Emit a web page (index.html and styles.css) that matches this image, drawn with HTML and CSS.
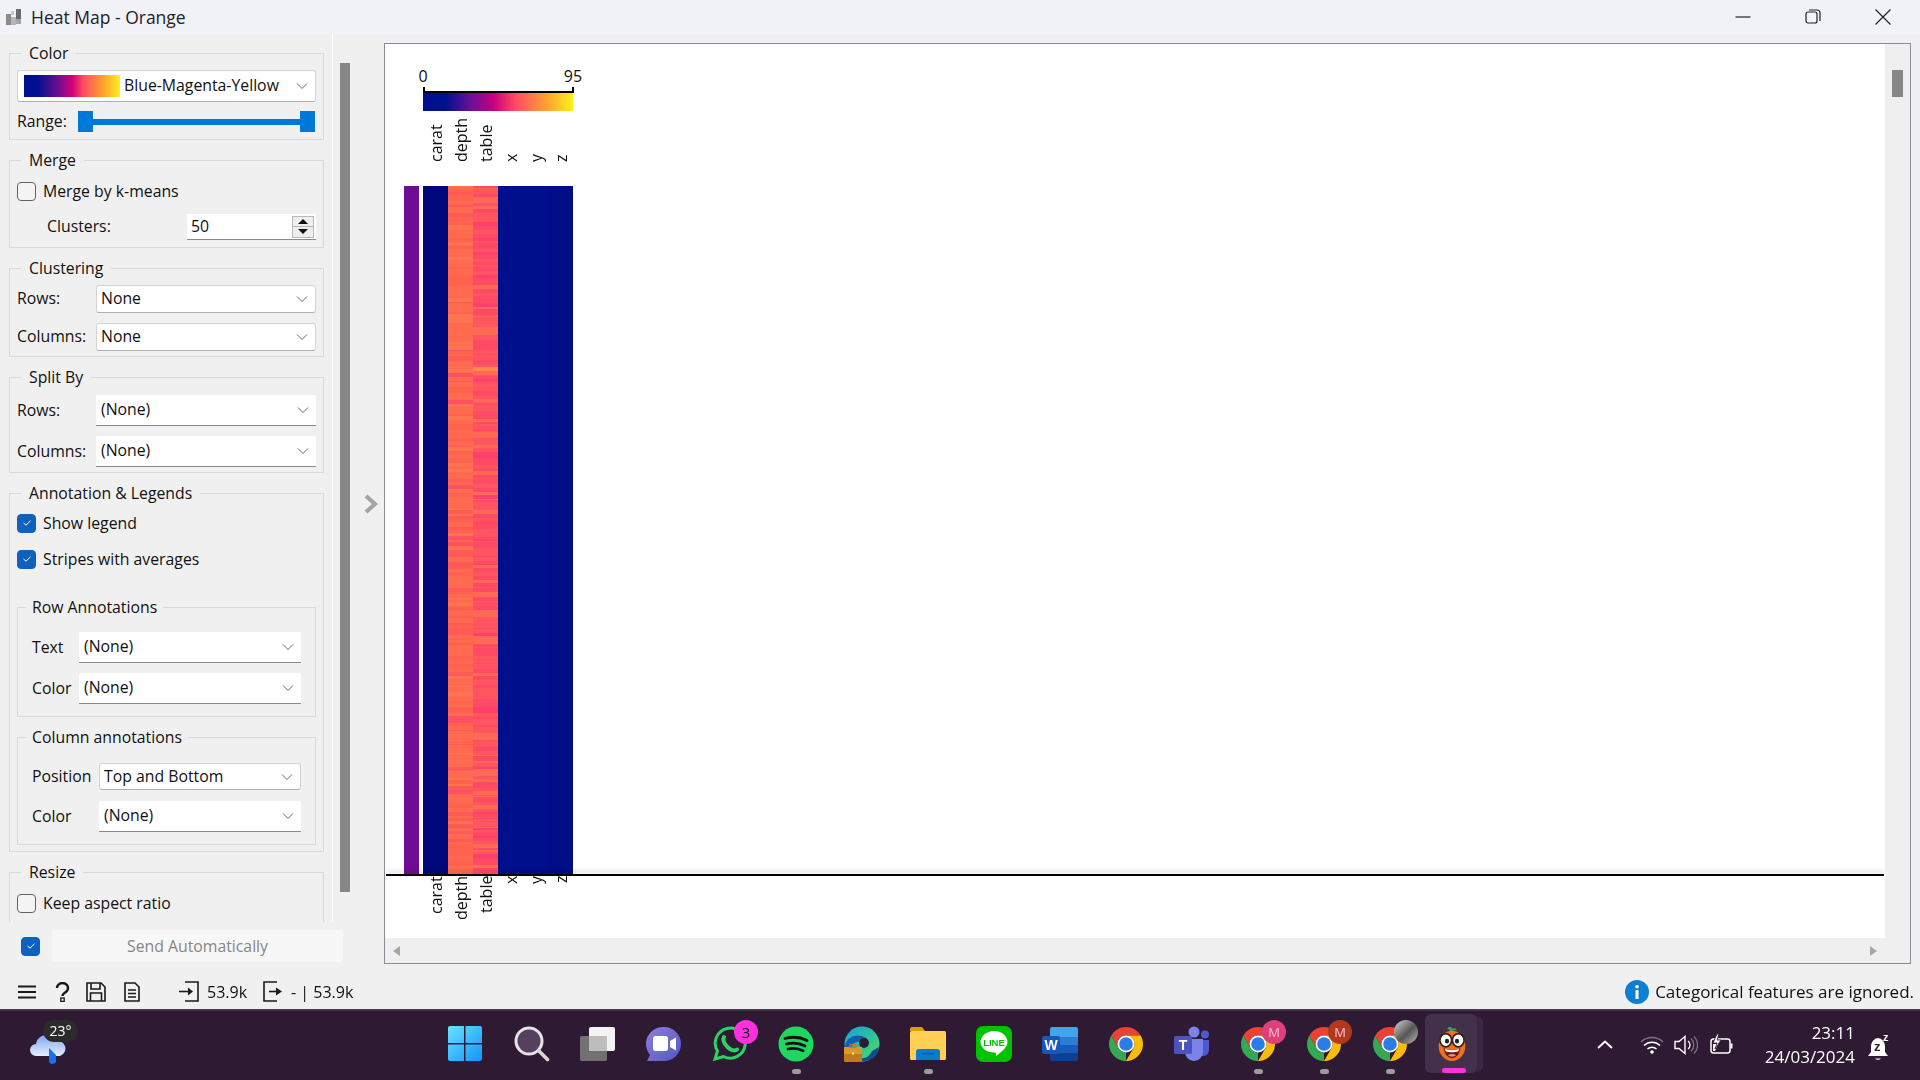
FILE: index.html
```html
<!DOCTYPE html>
<html lang="en">
<head>
    <meta charset="UTF-8">
    <title>Heat Map - Orange</title>
    <link rel="stylesheet" href="styles.css">
</head>
<body>
    <svg class="sprite" width="0" height="0">
        <symbol id="chrome" viewBox="0 0 36 36">
            <path fill="#ea4335" d="M3.3 9.5A17 17 0 0 1 32.7 9.5H18A8.5 8.5 0 0 0 10.6 22.2Z"/>
            <path fill="#fbbc04" d="M32.7 9.5A17 17 0 0 1 18 35L25.4 22.2A8.5 8.5 0 0 0 18 9.5Z"/>
            <path fill="#34a853" d="M18 35A17 17 0 0 1 3.3 9.5L10.6 22.2A8.5 8.5 0 0 0 18 26.5Z"/>
            <circle cx="18" cy="18" r="8.5" fill="#fff"/>
            <circle cx="18" cy="18" r="6.8" fill="#2a7de8"/>
        </symbol>
        <symbol id="chevron" viewBox="0 0 12 8">
            <path d="M1 1.5l5 5 5-5" fill="none" stroke="#666" stroke-width="1"/>
        </symbol>
        <symbol id="tick" viewBox="0 0 10 8">
            <path d="M1.5 4l2.5 2.2 4.5-4.4" fill="none" stroke="#fff" stroke-width="1"/>
        </symbol>
    </svg>

    <header class="titlebar">
        <svg class="app-icon" width="16" height="16" viewBox="0 0 16 16">
            <rect x="0" y="5" width="5" height="11" fill="#8a8a8a"/>
            <rect x="5" y="8" width="5" height="8" fill="#b5b5b5"/>
            <rect x="10" y="0" width="5" height="10" fill="#6a6a6a"/>
            <rect x="10" y="10" width="5" height="5" fill="#a5a5a5"/>
            <rect x="5" y="2" width="3" height="4" fill="#c8c8c8"/>
        </svg>
        <span class="title-text">Heat Map - Orange</span>
        <div class="window-btns">
            <div class="window-btn">
                <svg width="16" height="16" viewBox="0 0 16 16"><path d="M0.5 8h15" stroke="#222" stroke-width="1.2"/></svg>
            </div>
            <div class="window-btn">
                <svg width="16" height="16" viewBox="0 1 16 16"><rect x="1" y="4" width="11" height="11" rx="2" fill="none" stroke="#222" stroke-width="1.2"/><path d="M4 2h8a3 3 0 0 1 3 3v8" fill="none" stroke="#222" stroke-width="1.2"/></svg>
            </div>
            <div class="window-btn">
                <svg width="16" height="16" viewBox="0 0 16 16"><path d="M0.5 0.5l15 15M15.5 0.5l-15 15" stroke="#222" stroke-width="1.2"/></svg>
            </div>
        </div>
    </header>

    <main class="window-body">
        <div class="left-col">
            <div class="left-top">
                <div class="controls">
                    <fieldset class="group group-color">
                        <legend>Color</legend>
                        <div class="combo combo-outline combo-palette">
                            <span class="palette"></span>
                            <span class="combo-text">Blue-Magenta-Yellow</span>
                            <svg class="arrow"><use href="#chevron"/></svg>
                        </div>
                        <div class="row range-row">
                            <span class="label-range">Range:</span>
                            <div class="slider"><span class="handle"></span><span class="handle"></span></div>
                        </div>
                    </fieldset>

                    <fieldset class="group group-merge">
                        <legend>Merge</legend>
                        <label class="check-row merge-check"><span class="check"></span>Merge by k-means</label>
                        <div class="row clusters-row">
                            <span class="label-clusters">Clusters:</span>
                            <div class="spin">
                                <span class="spin-value">50</span>
                                <div class="spin-btns">
                                    <span class="spin-btn"><i class="tri-up"></i></span>
                                    <span class="spin-btn"><i class="tri-down"></i></span>
                                </div>
                            </div>
                        </div>
                    </fieldset>

                    <fieldset class="group group-clustering">
                        <legend>Clustering</legend>
                        <div class="row h28 first-clustering">
                            <span class="label-wide">Rows:</span>
                            <div class="combo combo-outline grow"><span class="combo-text">None</span><svg class="arrow"><use href="#chevron"/></svg></div>
                        </div>
                        <div class="row h28 second-clustering">
                            <span class="label-wide">Columns:</span>
                            <div class="combo combo-outline grow"><span class="combo-text">None</span><svg class="arrow"><use href="#chevron"/></svg></div>
                        </div>
                    </fieldset>

                    <fieldset class="group group-split">
                        <legend>Split By</legend>
                        <div class="row h31 first-split">
                            <span class="label-wide">Rows:</span>
                            <div class="combo grow"><span class="combo-text">(None)</span><svg class="arrow"><use href="#chevron"/></svg></div>
                        </div>
                        <div class="row h31 second-split">
                            <span class="label-wide">Columns:</span>
                            <div class="combo grow"><span class="combo-text">(None)</span><svg class="arrow"><use href="#chevron"/></svg></div>
                        </div>
                    </fieldset>

                    <fieldset class="group group-annotation">
                        <legend>Annotation &amp; Legends</legend>
                        <label class="check-row legend-check"><span class="check checked"><svg width="10" height="8"><use href="#tick"/></svg></span>Show legend</label>
                        <label class="check-row stripes-check"><span class="check checked"><svg width="10" height="8"><use href="#tick"/></svg></span>Stripes with averages</label>

                        <fieldset class="subgroup sub-row">
                            <legend>Row Annotations</legend>
                            <div class="row h31 first-rowann">
                                <span class="label-short">Text</span>
                                <div class="combo grow"><span class="combo-text">(None)</span><svg class="arrow"><use href="#chevron"/></svg></div>
                            </div>
                            <div class="row h31 second-rowann">
                                <span class="label-short">Color</span>
                                <div class="combo grow"><span class="combo-text">(None)</span><svg class="arrow"><use href="#chevron"/></svg></div>
                            </div>
                        </fieldset>

                        <fieldset class="subgroup sub-col">
                            <legend>Column annotations</legend>
                            <div class="row h27 first-colann">
                                <span class="label-pos">Position</span>
                                <div class="combo combo-outline grow"><span class="combo-text">Top and Bottom</span><svg class="arrow"><use href="#chevron"/></svg></div>
                            </div>
                            <div class="row h31 second-colann">
                                <span class="label-pos">Color</span>
                                <div class="combo grow"><span class="combo-text">(None)</span><svg class="arrow"><use href="#chevron"/></svg></div>
                            </div>
                        </fieldset>
                    </fieldset>

                    <fieldset class="group group-resize">
                        <legend>Resize</legend>
                        <label class="check-row resize-check"><span class="check"></span>Keep aspect ratio</label>
                    </fieldset>
                </div>
                <div class="panel-scroll"></div>
                <div class="collapse-arrow">
                    <svg width="14" height="20" viewBox="0 0 14 20"><path d="M2 2l9 8-9 8" fill="none" stroke="#a3a3a3" stroke-width="4"/></svg>
                </div>
            </div>
            <div class="send-row">
                <span class="check checked"><svg width="10" height="8"><use href="#tick"/></svg></span>
                <button class="send-btn">Send Automatically</button>
            </div>
        </div>

        <div class="main-area">
            <div class="graph-frame">
                <div class="plot">
                    <div class="plot-view">
                        <div class="scale-labels"><span>0</span><span>95</span></div>
                        <div class="scale-ticks"></div>
                        <div class="scale-bar"></div>
                        <div class="col-labels col-labels-top">
                            <span>carat</span><span>depth</span><span>table</span><span>x</span><span>y</span><span>z</span>
                        </div>
                        <canvas id="heatmap" class="heatmap" width="169" height="688"></canvas>
                        <div class="plot-rule"></div>
                        <div class="col-labels col-labels-bottom">
                            <span>carat</span><span>depth</span><span>table</span><span>x</span><span>y</span><span>z</span>
                        </div>
                    </div>
                    <div class="hscroll">
                        <i class="tri-left"></i>
                        <i class="tri-right"></i>
                    </div>
                </div>
                <div class="vscroll"><div class="vthumb"></div></div>
            </div>
        </div>
    </main>

    <footer class="statusbar">
        <div class="status-icons">
            <svg class="st-menu" width="18" height="14" viewBox="0 0 18 14"><path d="M0 1.5h18M0 7h18M0 12.5h18" stroke="#1a1a1a" stroke-width="2.2"/></svg>
            <svg class="st-help" width="15" height="20" viewBox="0 0 15 20"><path d="M2 6a5.500 5 0 1 1 8.500 4.200C8.500 11.500 7.500 12 7.500 14" fill="none" stroke="#1a1a1a" stroke-width="2.400"/><rect x="5.800" y="16" width="3.400" height="3.400" fill="none" stroke="#1a1a1a" stroke-width="1.300"/></svg>
            <svg class="st-save" width="20" height="20" viewBox="0 0 20 20"><path d="M1 1h14l4 4v14H1z" fill="none" stroke="#1a1a1a" stroke-width="1.600"/><path d="M5 1v6h9V1M4.500 19v-8h11v8" fill="none" stroke="#1a1a1a" stroke-width="1.600"/></svg>
            <svg class="st-doc" width="16" height="20" viewBox="0 0 16 20"><path d="M1 1h10l4 4v14H1z" fill="none" stroke="#1a1a1a" stroke-width="1.600"/><path d="M4 8h8M4 11.500h8M4 15h8" stroke="#1a1a1a" stroke-width="1.500"/></svg>
            <svg class="st-in" width="20" height="21" viewBox="0 0 20 21"><path d="M6 1h13v19H6" fill="none" stroke="#1a1a1a" stroke-width="1.600"/><path d="M0 10.500h11" stroke="#1a1a1a" stroke-width="1.600"/><path d="M9 6.500l5 4-5 4z" fill="#1a1a1a"/></svg>
            <span class="st-count st-count-in">53.9k</span>
            <svg class="st-out" width="20" height="21" viewBox="0 0 20 21"><path d="M14 1H1v19h13" fill="none" stroke="#1a1a1a" stroke-width="1.600"/><path d="M6 10.500h9" stroke="#1a1a1a" stroke-width="1.600"/><path d="M13 6.500l6 4-6 4z" fill="#1a1a1a"/></svg>
            <span class="st-count st-count-out">- | 53.9k</span>
        </div>
        <div class="status-msg">
            <svg width="24" height="24" viewBox="0 0 24 24"><circle cx="12" cy="12" r="12" fill="#0f7fd4"/><rect x="10.500" y="10" width="3" height="9" fill="#fff"/><circle cx="12" cy="6.800" r="1.800" fill="#fff"/></svg>
            <span>Categorical features are ignored.</span>
        </div>
    </footer>

    <nav class="taskbar">
        <div class="weather">
            <svg width="38" height="34" viewBox="0 0 38 34">
                <defs><linearGradient id="cloud" x1="0" y1="0" x2="0" y2="1"><stop offset="0" stop-color="#7fa6f0"/><stop offset="1" stop-color="#e6effd"/></linearGradient></defs>
                <path d="M7 24a6 6 0 0 1 0-12 10 10 0 0 1 19-3 7.500 7.500 0 0 1 5 15z" fill="url(#cloud)"/>
                <path d="M20 16l7 7v7a4 4 0 0 1-7 0z" fill="#1470f5"/>
            </svg>
            <span class="weather-badge">23°</span>
        </div>

        <div class="task-icons">
            <div class="task-item task-start">
                <svg width="36" height="36" viewBox="0 0 36 36">
                    <defs><linearGradient id="win" x1="0" y1="0" x2="1" y2="1"><stop offset="0" stop-color="#6ce0ff"/><stop offset="1" stop-color="#0f96fa"/></linearGradient></defs>
                    <path fill="url(#win)" d="M1 2a2 2 0 0 1 2-2h14v17H1zM18.500 0H33a2 2 0 0 1 2 2v15H18.500zM1 18.500h16V35H3a2 2 0 0 1-2-2zM18.500 18.500H35V33a2 2 0 0 1-2 2H18.500z"/>
                </svg>
            </div>
            <div class="task-item">
                <svg width="36" height="36" viewBox="0 0 36 36"><circle cx="15" cy="15" r="13" fill="#56405f" stroke="#e4e4e4" stroke-width="3"/><path d="M24.500 24.500l9 9" stroke="#d8d8d8" stroke-width="3.600" stroke-linecap="round"/></svg>
            </div>
            <div class="task-item">
                <svg width="36" height="36" viewBox="0 0 36 36"><rect x="9" y="1" width="26" height="24" rx="2" fill="#f4f4f4"/><rect x="0" y="10" width="27" height="25" rx="2" fill="#7a7a7a" fill-opacity=".9"/><rect x="9" y="10" width="18" height="15" fill="#bdbdbd"/></svg>
            </div>
            <div class="task-item">
                <svg width="36" height="36" viewBox="0 0 36 36">
                    <defs><linearGradient id="meet" x1="0" y1="0" x2="1" y2="1"><stop offset="0" stop-color="#8f7fd8"/><stop offset="1" stop-color="#5257c4"/></linearGradient></defs>
                    <path fill="url(#meet)" d="M18 1a17 17 0 0 1 0 34H1l3-6A17 17 0 0 1 18 1z"/>
                    <rect x="7" y="10" width="15" height="15" rx="2.500" fill="#fff"/><path d="M24 15l6-3.500v13L24 21z" fill="#fff"/>
                </svg>
            </div>
            <div class="task-item">
                <svg width="36" height="36" viewBox="0 0 36 36"><path d="M3 33l2.500-8A15 15 0 1 1 11.500 30.500z" fill="none" stroke="#2bd366" stroke-width="3"/><path d="M12 11c-1.500 3 .5 7 3.500 10s7 4.500 9.500 2.500" fill="none" stroke="#2bd366" stroke-width="4" stroke-linecap="round"/></svg>
                <span class="badge badge-count">3</span>
            </div>
            <div class="task-item has-dot">
                <svg width="36" height="36" viewBox="0 0 36 36"><circle cx="18" cy="18" r="17.500" fill="#1ed760"/><path d="M7 12.500c7-2 15-1.500 22 2M8.500 18c6-1.500 13-1 18.500 2M10 23c5-1 10-.8 15 1.800" fill="none" stroke="#111" stroke-width="2.800" stroke-linecap="round"/></svg>
            </div>
            <div class="task-item">
                <svg width="36" height="36" viewBox="0 0 36 36">
                    <defs><linearGradient id="edge" x1="0" y1="0" x2="1" y2="1"><stop offset="0" stop-color="#1a9fe0"/><stop offset=".6" stop-color="#2fc98c"/><stop offset="1" stop-color="#77d64c"/></linearGradient></defs>
                    <circle cx="18" cy="18" r="17.500" fill="url(#edge)"/>
                    <path d="M1 20C3 10 14 7 22 12c4 3 2 8-1 8s-3-5-8-4-8 6-4 14C4 28 1 25 1 20z" fill="#0f5fb0"/>
                    <path d="M35 21c-1 8-7 14-15 14-3 0-5-1-6-3 8 2 12-3 14-7z" fill="#0c4f98"/>
                    <circle cx="20" cy="17" r="5" fill="#2f1a33"/>
                    <rect x="0" y="21" width="18" height="15" rx="1" fill="#c07a18"/><rect x="0" y="21" width="18" height="7" fill="#e09528"/><rect x="6" y="18.500" width="6" height="3" fill="none" stroke="#c07a18" stroke-width="1.300"/><rect x="8" y="26.500" width="2" height="2" fill="#ffe6a0"/>
                </svg>
            </div>
            <div class="task-item has-dot">
                <svg width="36" height="36" viewBox="0 0 36 36">
                    <path d="M0 3a2 2 0 0 1 2-2h10l3 4h-15z" fill="#d9a000"/><rect x="0" y="5" width="36" height="29" rx="1.500" fill="#ffd055"/><path d="M6 34v-8a3 3 0 0 1 3-3h18a3 3 0 0 1 3 3v8z" fill="#0b7ccc"/><rect x="12" y="27" width="12" height="1.500" fill="#065a9c"/>
                </svg>
            </div>
            <div class="task-item">
                <svg width="36" height="36" viewBox="0 0 36 36">
                    <rect x="0" y="0" width="36" height="36" rx="7" fill="#00c300"/>
                    <path d="M18 5c7.500 0 13.500 4.800 13.500 11 0 5-5 9-11.500 14 .5-3 .2-3.500-2-3.500-7.500 0-13.500-4.800-13.500-10.500S10.500 5 18 5z" fill="#fff"/>
                    <text x="18" y="20" class="line-text" text-anchor="middle">LINE</text>
                </svg>
            </div>
            <div class="task-item">
                <svg width="36" height="36" viewBox="0 0 36 36">
                    <path d="M8 3a2 2 0 0 1 2-2h24a2 2 0 0 1 2 2v8H8z" fill="#41a5ee"/><rect x="8" y="11" width="28" height="8" fill="#2b7cd3"/><rect x="8" y="19" width="28" height="8" fill="#185abd"/><path d="M8 27h28v6a2 2 0 0 1-2 2H10a2 2 0 0 1-2-2z" fill="#103f91"/>
                    <rect x="0" y="10" width="18" height="18" rx="2" fill="#1856b8"/>
                    <text x="9" y="24" class="word-text" text-anchor="middle">W</text>
                </svg>
            </div>
            <div class="task-item">
                <svg width="36" height="36"><use href="#chrome"/></svg>
            </div>
            <div class="task-item">
                <svg width="36" height="36" viewBox="0 0 36 36">
                    <circle cx="20" cy="6" r="5.500" fill="#7b83eb"/><circle cx="31" cy="8.500" r="4" fill="#5059c9"/>
                    <path d="M26 14h9v10a6 6 0 0 1-7 6z" fill="#5059c9"/>
                    <path d="M11 13h18v13a9 9 0 0 1-18 0z" fill="#7b83eb"/>
                    <rect x="0" y="10" width="18" height="18" rx="1.500" fill="#4b53bc"/>
                    <text x="9" y="24" class="word-text" text-anchor="middle">T</text>
                </svg>
            </div>
            <div class="task-item has-dot">
                <svg width="36" height="36"><use href="#chrome"/></svg>
                <span class="badge badge-m badge-pink">M</span>
            </div>
            <div class="task-item has-dot">
                <svg width="36" height="36"><use href="#chrome"/></svg>
                <span class="badge badge-m badge-rust">M</span>
            </div>
            <div class="task-item has-dot">
                <svg width="36" height="36"><use href="#chrome"/></svg>
                <span class="badge badge-m badge-photo"></span>
            </div>
            <div class="task-item active">
                <span class="active-back"></span>
                <span class="active-tile"></span>
                <svg class="mascot" width="30" height="36" viewBox="0 0 36 38" preserveAspectRatio="none">
                    <path d="M16 6c-1-2-2-3-4-3 3-3 5-3 6 0 2-1 4-1 6 1-3 0-5 1-6 2z" fill="#2aa866"/>
                    <circle cx="18" cy="21" r="16" fill="#f4701e"/>
                    <path d="M8 23c4 3 16 3 20 0-1 8-6 11-10 11s-9-3-10-11z" fill="#6d1a14"/>
                    <path d="M9.500 24c4 2 13 2 17 0l-1 3c-4 1-11 1-15 0z" fill="#fff"/>
                    <path d="M13 31c3-2 7-2 10 0-3 2-7 2-10 0z" fill="#f08a8a"/>
                    <circle cx="10.500" cy="15" r="7" fill="#fff" stroke="#3a2218" stroke-width="2"/>
                    <circle cx="25.500" cy="15" r="7" fill="#fff" stroke="#3a2218" stroke-width="2"/>
                    <circle cx="12" cy="16" r="2.500" fill="#222"/><circle cx="24" cy="16" r="2.500" fill="#222"/>
                </svg>
                <span class="active-bar"></span>
            </div>
        </div>

        <div class="tray">
            <svg class="tray-chevron" width="16" height="9" viewBox="0 0 16 9"><path d="M1 8l7-6.500L15 8" fill="none" stroke="#fff" stroke-width="2"/></svg>
            <svg class="tray-wifi" width="24" height="18" viewBox="0 0 24 18"><path d="M1 6a16 16 0 0 1 22 0" fill="none" stroke="#7f7285" stroke-width="1.500"/><path d="M4 9.500a11.500 11.500 0 0 1 16 0M7.500 13a6.500 6.500 0 0 1 9 0" fill="none" stroke="#fff" stroke-width="1.500"/><circle cx="12" cy="16" r="1.800" fill="#fff"/></svg>
            <svg class="tray-volume" width="24" height="20" viewBox="0 0 24 20"><path d="M1 6.500h4l6-5v17l-6-5H1z" fill="none" stroke="#fff" stroke-width="1.400"/><path d="M14 6a5 5 0 0 1 0 8" fill="none" stroke="#fff" stroke-width="1.300"/><path d="M17 3.500a9 9 0 0 1 0 13M20 1.500a12 12 0 0 1 0 17" fill="none" stroke="#7f7285" stroke-width="1.300"/></svg>
            <svg class="tray-battery" width="24" height="22" viewBox="0 0 24 22"><rect x="2" y="5" width="19" height="14" rx="2.500" fill="none" stroke="#fff" stroke-width="1.500"/><rect x="21.500" y="9.500" width="2" height="5" fill="#fff"/><path d="M4 17V10h5l-3 7z" fill="#fff"/><path d="M8 0L4 9h4l-2 6 6-9H8l2-6z" fill="#fff" stroke="#2f1a33" stroke-width=".8"/></svg>
            <div class="clock"><span>23:11</span><span>24/03/2024</span></div>
            <svg class="tray-bell" width="24" height="34" viewBox="0 -6 24 34">
                <path d="M10 4a8 8 0 0 0-7 8v6l-3 4h20l-3-4v-6a8 8 0 0 0-7-8z" fill="#fff"/>
                <path d="M7 24.500a3.500 2.500 0 0 0 6 0z" fill="#fff"/>
                <text x="6" y="17" class="bell-z">z</text>
                <text x="15" y="7" class="bell-z-top">z</text>
            </svg>
        </div>
    </nav>

    <script src="script.js"></script>
</body>
</html>
```

FILE: styles.css
```css
* {
    box-sizing: border-box;
}

body {
    margin: 0;
    width: 1920px;
    height: 1080px;
    overflow: hidden;
    display: flex;
    flex-direction: column;
    background: #f0f0f0;
    font-family: "Open Sans", "Noto Sans", sans-serif;
    font-size: 15.8px;
    color: #111;
}

.sprite {
    display: none;
}

/* title bar */
.titlebar {
    height: 34px;
    flex: none;
    display: flex;
    align-items: center;
    padding-left: 6px;
    background: #f0f2f8;
}

.title-text {
    margin-left: 9px;
    font-size: 17.5px;
    color: #222;
}

.window-btns {
    margin-left: auto;
    display: flex;
    padding-right: 2px;
}

.window-btn {
    width: 70px;
    height: 34px;
    display: flex;
    align-items: center;
    justify-content: center;
}

/* layout */
.window-body {
    height: 930px;
    flex: none;
    display: flex;
}

.left-col {
    width: 384px;
    flex: none;
    display: flex;
    flex-direction: column;
}

.left-top {
    height: 888px;
    display: flex;
}

.controls {
    width: 333px;
    flex: none;
    height: 888px;
    overflow: hidden;
    padding: 8px 0 0 9px;
    border-right: 1px solid #fff;
}

.panel-scroll {
    width: 10px;
    height: 829px;
    margin: 29px 0 0 7px;
    background: #868686;
}

.collapse-arrow {
    margin: 460px 0 0 14px;
}

.send-row {
    display: flex;
    align-items: center;
    gap: 12px;
    padding: 8px 0 0 21px;
}

.send-btn {
    width: 291px;
    height: 32px;
    border: none;
    border-radius: 3px;
    background: #f7f7f7;
    color: #868686;
    font-family: inherit;
    font-size: 15.8px;
}

/* groups */
fieldset {
    margin: 0;
    min-width: 0;
    border: 1px solid #d9d9d9;
}

legend {
    height: 22px;
    line-height: 22px;
    padding: 0;
}

.group {
    width: 315px;
    margin-bottom: 9px;
    padding: 0 7px;
}

.group legend {
    margin-left: 4px;
    padding: 0 8px;
}

.subgroup {
    width: 299px;
    padding: 0 14px;
}

.subgroup legend {
    margin-left: -6px;
    padding: 0 6px;
}

.group-color { height: 98px; padding-top: 6px; }
.group-merge { height: 99px; }
.group-clustering { height: 100px; }
.group-split { height: 107px; }
.group-annotation { height: 370px; }
.group-resize { height: 120px; }

.sub-row { height: 121px; margin-top: 26px; }
.sub-col { height: 119px; margin-top: 9px; }

.row {
    display: flex;
    align-items: center;
}

.h27 { height: 27px; }
.h28 { height: 28px; }
.h31 { height: 31px; }
.grow { flex: 1; }

.first-clustering { margin-top: 6px; }
.second-clustering { margin-top: 10px; }
.first-split { margin-top: 7px; }
.second-split { margin-top: 10px; }
.first-rowann { margin-top: 14px; }
.second-rowann { margin-top: 10px; }
.first-colann { margin-top: 15px; }
.second-colann { margin-top: 11px; }

.label-wide, .label-short, .label-pos, .label-range, .label-clusters, .combo-text, .spin-value {
    margin-top: -2px;
}

.label-wide { width: 79px; }
.label-short { width: 47px; }
.label-pos { width: 67px; }
.label-range { width: 61px; }
.label-clusters { width: 140px; padding-left: 30px; }

/* combos */
.combo {
    height: 100%;
    display: flex;
    align-items: center;
    justify-content: space-between;
    padding: 0 7px 0 5px;
    background: #fff;
    border-bottom: 1px solid #8a8a8a;
    border-radius: 2px 2px 0 0;
}

.combo-outline {
    padding-left: 4px;
    border: 1px solid #d4d4d4;
    border-bottom-color: #b0b0b0;
    border-radius: 3px;
}

.arrow {
    width: 12px;
    height: 8px;
    flex: none;
}

.combo-palette {
    height: 32px;
    padding-left: 6px;
}

.palette {
    width: 96px;
    height: 22px;
    flex: none;
    background: linear-gradient(90deg, #000f8c 0%, #001090 14%, #6a0f90 35%, #d0007a 50%, #ff4d62 62%, #ffa030 82%, #fff01e 100%);
}

.combo-palette .combo-text {
    margin-left: 4px;
    margin-right: auto;
}

/* slider */
.range-row {
    height: 23px;
    margin-top: 8px;
}

.slider {
    width: 237px;
    height: 21px;
    display: flex;
    justify-content: space-between;
    background: linear-gradient(#0078d7, #0078d7) center / 100% 6px no-repeat;
}

.handle {
    width: 15px;
    height: 21px;
    background: #0078d7;
}

/* checks */
.check-row {
    height: 22px;
    display: flex;
    align-items: center;
    gap: 7px;
}

.check {
    width: 19px;
    height: 19px;
    flex: none;
    display: flex;
    align-items: center;
    justify-content: center;
    border: 1px solid #626262;
    border-radius: 4px;
    background: #f4f4f4;
}

.check.checked {
    border-color: #0e62bd;
    background: #0e62bd;
}

.merge-check { margin-top: 9px; }
.legend-check { margin-top: 8px; }
.stripes-check { margin-top: 14px; }
.resize-check { margin-top: 9px; }

/* spin box */
.clusters-row {
    height: 26px;
    margin-top: 12px;
}

.clusters-row .label-clusters {
    width: 170px;
}

.spin {
    width: 129px;
    height: 26px;
    display: flex;
    align-items: center;
    justify-content: space-between;
    padding: 0 2px 0 4px;
    background: #fff;
    border-bottom: 1px solid #8a8a8a;
}

.spin-btns {
    width: 22px;
    height: 22px;
    display: flex;
    flex-direction: column;
    border: 1px solid #b9b9b9;
    background: #efefef;
}

.spin-btn {
    flex: 1;
    display: flex;
    align-items: center;
    justify-content: center;
}

.spin-btn + .spin-btn {
    border-top: 1px solid #b9b9b9;
}

.tri-up, .tri-down {
    width: 0;
    height: 0;
    border-left: 5px solid transparent;
    border-right: 5px solid transparent;
}

.tri-up { border-bottom: 5px solid #111; }
.tri-down { border-top: 5px solid #111; }

/* graph */
.main-area {
    flex: 1;
    padding: 9px 9px 0 0;
}

.graph-frame {
    height: 921px;
    display: flex;
    background: #fff;
    border: 1px solid #8b8b93;
}

.plot {
    flex: 1;
    display: flex;
    flex-direction: column;
}

.plot-view {
    flex: 1;
    overflow: hidden;
}

.scale-labels {
    width: 170px;
    margin: 21px 0 0 28px;
    display: flex;
    justify-content: space-between;
    line-height: 22px;
    font-size: 16px;
}

.scale-labels span {
    width: 20px;
    text-align: center;
}

.scale-ticks {
    width: 151px;
    height: 6px;
    margin-left: 38px;
    border: solid #000;
    border-width: 0 2px 2px;
}

.scale-bar {
    width: 150px;
    height: 18px;
    margin-left: 38px;
    background: linear-gradient(90deg, #000f8c 0%, #001090 15%, #6a0f98 32%, #c8007e 47%, #ff4d62 62%, #ffa030 82%, #fff01e 100%);
}

.col-labels {
    width: 150px;
    margin-left: 38px;
    display: flex;
    font-size: 16px;
}

.col-labels span {
    width: 25px;
    display: block;
    writing-mode: vertical-rl;
    transform: rotate(180deg) translateX(-1px);
    line-height: 25px;
}

.col-labels-top {
    height: 51px;
}

.col-labels-top span {
    text-align: left;
}

.col-labels-bottom {
    height: 60px;
}

.col-labels-bottom span {
    text-align: right;
}

.heatmap {
    display: block;
    margin: 24px 0 0 19px;
}

.plot-rule {
    height: 2px;
    margin: 0 1px;
    background: #000;
    box-shadow: 0 -3px 4px rgba(0, 0, 0, 0.18);
    position: relative;
}

.hscroll {
    height: 25px;
    flex: none;
    display: flex;
    align-items: center;
    justify-content: space-between;
    padding: 0 8px;
    background: #efefef;
}

.tri-left, .tri-right {
    width: 0;
    height: 0;
    border-top: 5px solid transparent;
    border-bottom: 5px solid transparent;
}

.tri-left { border-right: 7px solid #a6a6a6; }
.tri-right { border-left: 7px solid #a6a6a6; }

.vscroll {
    width: 25px;
    flex: none;
    padding: 26px 7px 0;
    background: #efefef;
}

.vthumb {
    width: 11px;
    height: 27px;
    background: #868686;
}

/* status bar */
.statusbar {
    height: 45px;
    flex: none;
    display: flex;
    align-items: center;
    justify-content: space-between;
    padding: 10px 6px 0 18px;
}

.status-icons {
    display: flex;
    align-items: center;
}

.st-help { margin-left: 19px; }
.st-save { margin-left: 16px; }
.st-doc { margin-left: 18px; }
.st-in { margin-left: 39px; }
.st-out { margin-left: 16px; }

.st-count {
    margin-left: 8px;
    font-size: 16px;
}

.status-msg {
    display: flex;
    align-items: center;
    gap: 6px;
    font-size: 17px;
}

/* taskbar */
.taskbar {
    flex: 1;
    display: flex;
    align-items: center;
    background: #2f1a33;
    border-top: 2px solid #453548;
}

.weather {
    width: 433px;
    flex: none;
    height: 100%;
    padding: 21px 0 0 29px;
    position: relative;
}

.weather-badge {
    position: absolute;
    left: 43px;
    top: 9px;
    width: 35px;
    height: 22px;
    border-radius: 11px;
    background: #2b2b2b;
    color: #fff;
    font-size: 14px;
    line-height: 22px;
    text-align: center;
}

.task-icons {
    display: flex;
    height: 100%;
}

.task-item {
    width: 66px;
    height: 100%;
    display: flex;
    align-items: center;
    justify-content: center;
    padding-bottom: 4px;
    position: relative;
}

.task-start {
    padding-right: 3px;
}

.has-dot::after {
    content: "";
    position: absolute;
    left: 29px;
    bottom: 6px;
    width: 9px;
    height: 5px;
    border-radius: 3px;
    background: #9c9c9c;
}

.badge {
    position: absolute;
    border-radius: 50%;
    text-align: center;
}

.badge-count {
    left: 37px;
    top: 9px;
    width: 24px;
    height: 24px;
    background: #ff30e0;
    color: #111;
    font-size: 15px;
    line-height: 24px;
}

.badge-m {
    left: 37px;
    top: 9px;
    width: 24px;
    height: 24px;
    color: #f6c0d0;
    font-size: 13px;
    line-height: 24px;
}

.badge-pink { background: #e0407a; }
.badge-rust { background: #b4391c; }
.badge-photo { background: linear-gradient(135deg, #d8d8d8, #555 55%, #bbb); }

.line-text {
    font-family: "Liberation Sans", sans-serif;
    font-size: 9.5px;
    font-weight: bold;
    fill: #00c300;
}

.word-text {
    font-family: "Liberation Sans", sans-serif;
    font-size: 14px;
    font-weight: bold;
    fill: #fff;
}

.active-tile {
    position: absolute;
    left: 2px;
    top: 3px;
    width: 52px;
    height: 59px;
    border-radius: 6px;
    background: #43304a;
}

.active-back {
    position: absolute;
    left: 40px;
    top: 5px;
    width: 20px;
    height: 56px;
    border-radius: 6px;
    background: #3a2640;
}

.mascot {
    position: relative;
    margin-right: 8px;
}

.active-bar {
    position: absolute;
    left: 19px;
    top: 57px;
    width: 24px;
    height: 5px;
    border-radius: 3px;
    background: #ff30e0;
}

.tray {
    flex: 1;
    display: flex;
    align-items: center;
    height: 100%;
    padding-bottom: 2px;
}

.tray-chevron { margin-left: 108px; }
.tray-wifi { margin-left: 27px; }
.tray-volume { margin-left: 10px; }
.tray-battery { margin-left: 11px; }

.clock {
    width: 122px;
    display: flex;
    flex-direction: column;
    align-items: flex-end;
    color: #fff;
    font-size: 17px;
    line-height: 24px;
}

.tray-bell { margin-left: 13px; }

.bell-z {
    font-family: "Liberation Sans", sans-serif;
    font-size: 13px;
    font-weight: bold;
    fill: #2f1a33;
}

.bell-z-top {
    font-family: "Liberation Sans", sans-serif;
    font-size: 11px;
    font-weight: bold;
    fill: #fff;
}
```

FILE: script.js
```js
// fills the heat map canvas with thin horizontal bands per column
const canvas = document.getElementById('heatmap');
const ctx = canvas.getContext('2d');

let seed = 7;
function rand() {
    seed = (seed * 16807) % 2147483647;
    return seed / 2147483647;
}

function pick(colors, weights) {
    let r = rand();
    for (let i = 0; i < colors.length; i++) {
        if (r < weights[i]) return colors[i];
        r -= weights[i];
    }
    return colors[0];
}

const depthColors = ['#ff6a50', '#ff6350', '#ff5a58', '#ff7450', '#ff4f62'];
const depthWeights = [0.5, 0.2, 0.15, 0.1, 0.05];
const tableColors = ['#ff5560', '#ff4a66', '#ff6a54', '#ff406c', '#ff8a48'];
const tableWeights = [0.42, 0.3, 0.17, 0.1, 0.01];

// purple stripe and the flat blue columns
ctx.fillStyle = '#6e0c96';
ctx.fillRect(0, 0, 15, 688);
ctx.fillStyle = '#00087c';
ctx.fillRect(19, 0, 25, 688);
ctx.fillStyle = '#000f8c';
ctx.fillRect(69, 0, 75, 688);
ctx.fillStyle = '#000d86';
ctx.fillRect(144, 0, 25, 688);

function bands(x, colors, weights) {
    let y = 0;
    while (y < 688) {
        const h = 1 + Math.floor(rand() * 4);
        ctx.fillStyle = pick(colors, weights);
        ctx.fillRect(x, y, 25, h);
        y += h;
    }
}

bands(44, depthColors, depthWeights);
bands(69, tableColors, tableWeights);
```
